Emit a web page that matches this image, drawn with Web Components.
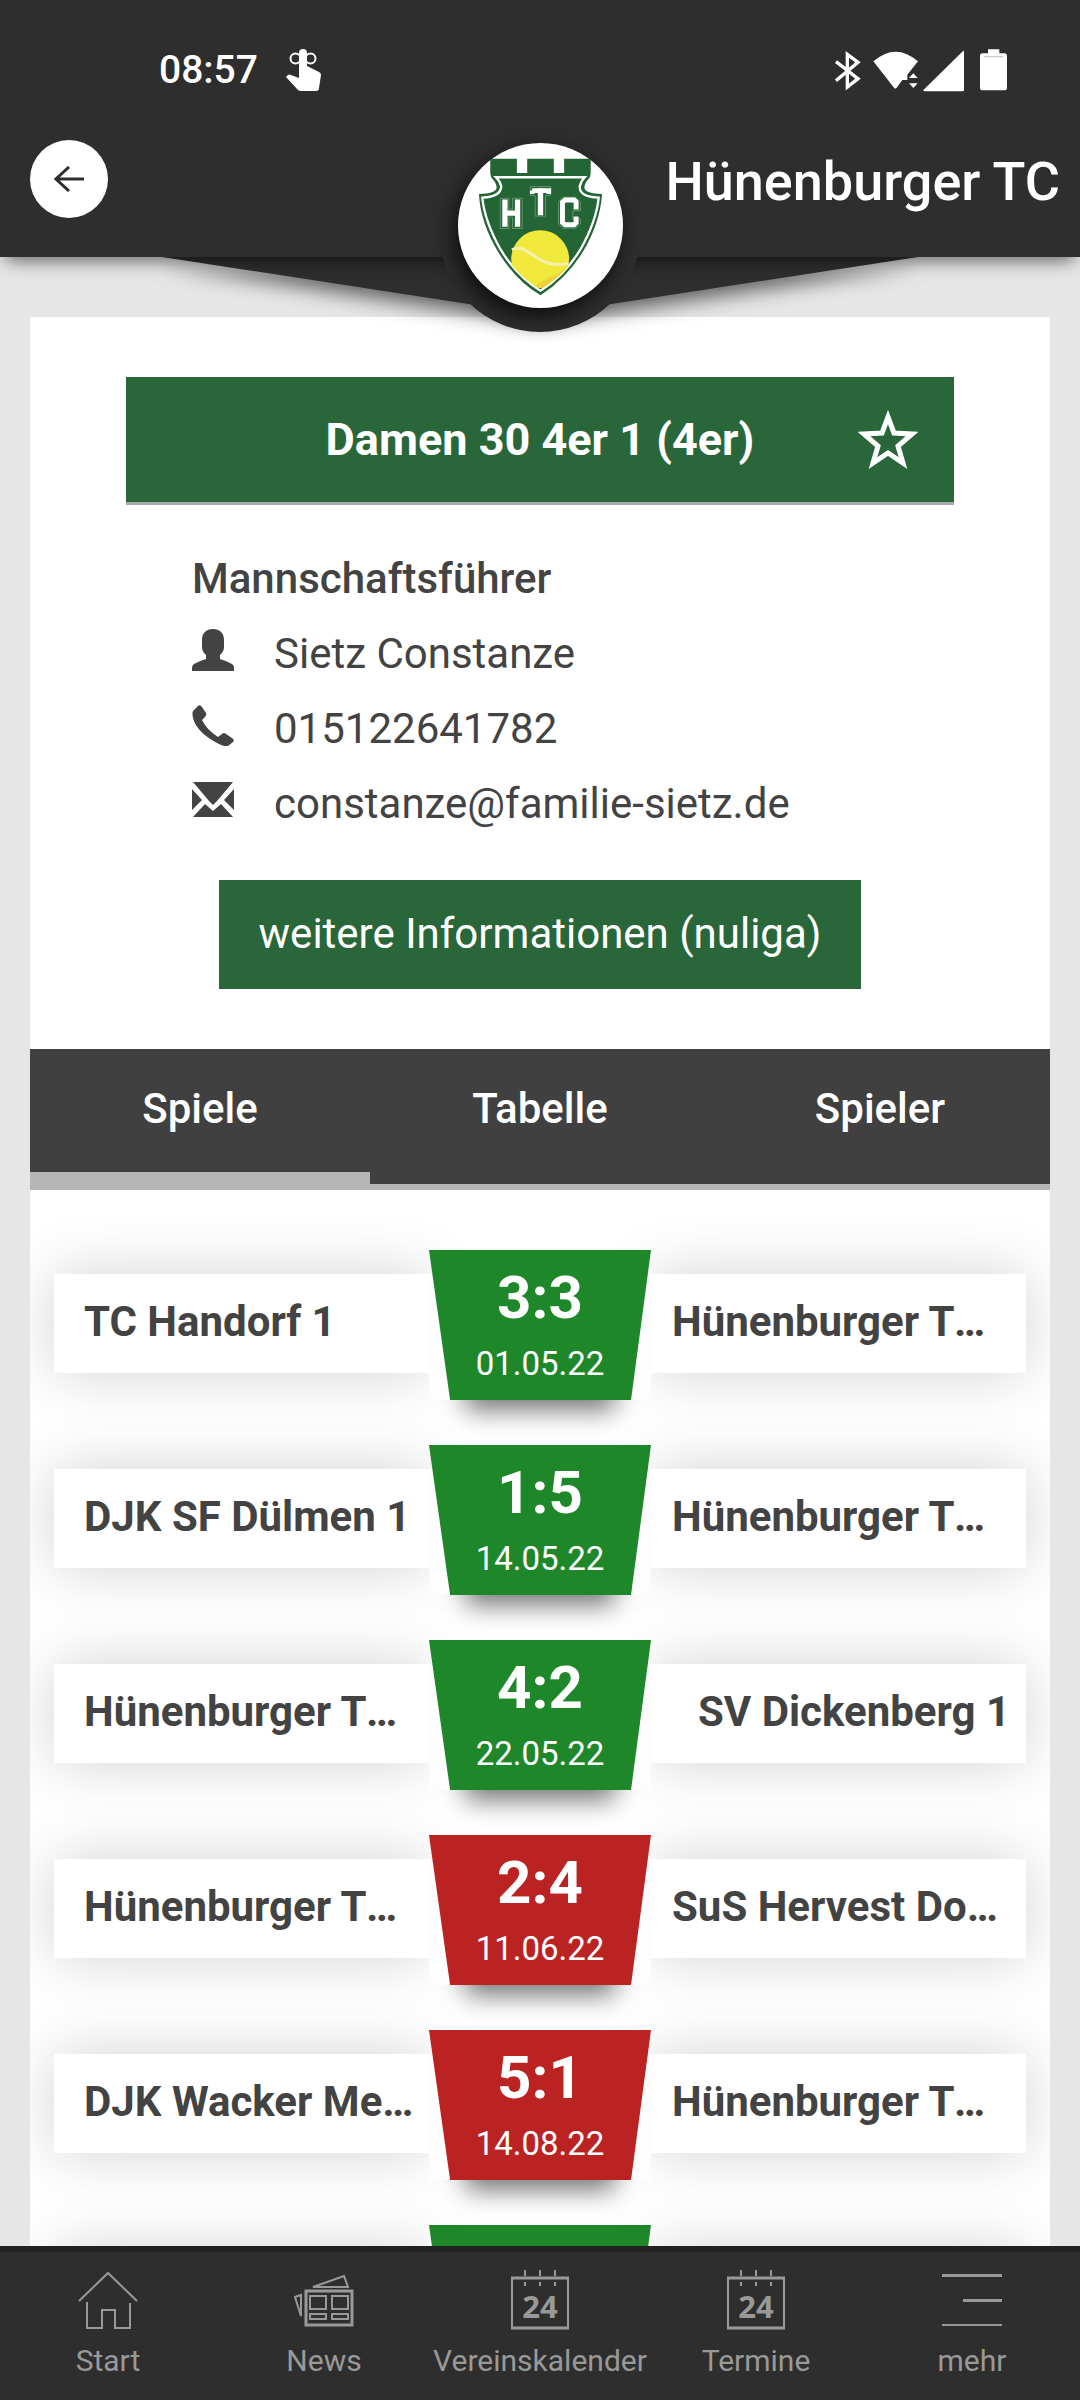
<!DOCTYPE html>
<html lang="de">
<head>
<meta charset="utf-8">
<meta name="viewport" content="width=device-width, initial-scale=1">
<title>Hünenburger TC</title>
<style>
  html, body { margin: 0; height: 100%; }
  body {
    --bar: #2e2e2e;
    --club: #296639;
    --ink: #434343;
    --rule: #b6b6b6;
    font-family: Roboto, "Liberation Sans", sans-serif;
    font-size: 42px;
    line-height: 49px;
    color: var(--ink);
    background: #e6e6e6;
  }
</style>
</head>
<body>
<club-app>
  <app-header slot="header">
    <status-bar slot="status">08:57</status-bar>
    Hünenburger TC
  </app-header>

  <team-panel>
    <span slot="name">Damen 30 4er 1 (4er)</span>
    <span slot="role">Mannschaftsführer</span>
    <contact-line icon="person">Sietz Constanze</contact-line>
    <contact-line icon="phone" href="tel:015122641782">015122641782</contact-line>
    <contact-line icon="mail" href="mailto:constanze@familie-sietz.de">constanze@familie-sietz.de</contact-line>
    <span slot="more">weitere Informationen (nuliga)</span>
  </team-panel>

  <tab-bar>
    <tab-item selected>Spiele</tab-item>
    <tab-item>Tabelle</tab-item>
    <tab-item>Spieler</tab-item>
  </tab-bar>

  <match-list>
    <match-row result="won"><span slot="home">TC Handorf 1</span><span slot="score">3:3</span><span slot="date">01.05.22</span><span slot="away">Hünenburger TC 1</span></match-row>
    <match-row result="won"><span slot="home">DJK SF Dülmen 1</span><span slot="score">1:5</span><span slot="date">14.05.22</span><span slot="away">Hünenburger TC 1</span></match-row>
    <match-row result="won"><span slot="home">Hünenburger TC 1</span><span slot="score">4:2</span><span slot="date">22.05.22</span><span slot="away">SV Dickenberg 1</span></match-row>
    <match-row result="lost"><span slot="home">Hünenburger TC 1</span><span slot="score">2:4</span><span slot="date">11.06.22</span><span slot="away">SuS Hervest Dorsten</span></match-row>
    <match-row result="lost"><span slot="home">DJK Wacker Meckl.</span><span slot="score">5:1</span><span slot="date">14.08.22</span><span slot="away">Hünenburger TC 1</span></match-row>
    <match-row result="won"></match-row>
  </match-list>

  <bottom-nav slot="nav">
    <nav-item icon="home">Start</nav-item>
    <nav-item icon="news">News</nav-item>
    <nav-item icon="calendar">Vereinskalender</nav-item>
    <nav-item icon="calendar">Termine</nav-item>
    <nav-item icon="more">mehr</nav-item>
  </bottom-nav>
</club-app>

<script>
const define = (name, template) => customElements.define(name, class extends HTMLElement {
  constructor() {
    super();
    this.attachShadow({ mode: "open" });
  }
  connectedCallback() {
    this.shadowRoot.innerHTML = typeof template === "function" ? template(this) : template;
  }
});

/* Page frame: header and navigation stay, the middle scrolls. */
define("club-app", `
  <style>
    :host { display: flex; flex-direction: column; height: 100vh; }
    main { flex: 1; min-height: 0; overflow-y: auto; scrollbar-width: none; padding: 60px 30px 0; }
    main::-webkit-scrollbar { display: none; }
    .sheet { background: #fff; overflow: hidden; }
  </style>
  <slot name="header"></slot>
  <main><div class="sheet"><slot></slot></div></main>
  <slot name="nav"></slot>`);

define("status-bar", `
  <style>
    :host { display: flex; align-items: center; gap: 28px; height: 140px; padding: 0 72px 0 159px;
      font-size: 39px; font-weight: 500; color: #fff; }
    .system { margin-left: auto; }
    svg { display: block; flex: none; fill: #fff; }
  </style>
  <span><slot></slot></span>
  <svg width="36" height="42" viewBox="0 0 36 42" aria-hidden="true">
    <g fill="none" stroke="#fff" stroke-width="2"><circle cx="9.500" cy="9.500" r="5"/><circle cx="24.500" cy="9.500" r="5"/></g>
    <path d="M13 4a4 4 0 0 1 8 0v13l12 6q2 1 2 3l-2 13q0 3-3 3H15q-2 0-3-1L0 28l2-2q1-1 3 0l8 3z"/>
  </svg>
  <svg class="system" width="173" height="44" viewBox="45 50 519 132" aria-hidden="true">
    <path d="M48 91l66 51-32 25V69l32 24-66 55" fill="none" stroke="#fff" stroke-width="10"/>
    <path d="M160 90q67-58 134 0l-32 40v16h-15l-17 23q-4 5-8 0z"/>
    <path d="M267 140l13-14 13 14zM267 156h26l-13 14z"/>
    <path d="M430 58q2 0 2 3v115q0 4-4 4H313q-5-1-2-5z"/>
    <path d="M504 54h34v12h15q8 0 8 8v95q0 8-8 8h-65q-8 0-8-8V74q0-8 8-8h16z"/>
    <path d="M492 76h58" stroke="#ccc" stroke-width="4"/>
  </svg>`);

define("app-header", `
  <style>
    :host { display: block; position: relative; z-index: 2; flex: none; }
    .bar { position: relative; padding-bottom: 39px; background: var(--bar); color: #fff;
      box-shadow: 0 10px 16px -6px rgba(0,0,0,.55); }
    .row { display: flex; justify-content: space-between; height: 78px; padding: 0 20px 0 30px; }
    h1 { margin: 0; font-size: 54px; line-height: 84px; font-weight: 500; white-space: nowrap; }
    button { width: 78px; height: 78px; padding: 0; border: 0; border-radius: 50%; background: #fff;
      display: grid; place-items: center; }
    .wedge { position: absolute; left: 15%; right: 15%; top: 100%; height: 58px;
      filter: drop-shadow(0 8px 10px rgba(0,0,0,.6)); }
    .wedge::before { content: ""; display: block; height: 100%; background: var(--bar);
      clip-path: polygon(0 0, 100% 0, 50% 100%); }
    .crest { position: absolute; left: 50%; bottom: -75px; width: 202px; height: 202px; margin-left: -101px;
      border-radius: 50%; background: var(--bar); display: grid; place-items: center; }
    .crest div { width: 165px; height: 165px; margin-bottom: 12px; border-radius: 50%; background: #fff;
      overflow: hidden; box-shadow: -4px 8px 22px rgba(0,0,0,.75); }
    svg { display: block; }
  </style>
  <div class="wedge"></div>
  <header class="bar">
    <slot name="status"></slot>
    <div class="row">
      <button type="button" aria-label="Zurück">
        <svg width="30" height="26" viewBox="0 0 30 26" fill="none" stroke="#2e2e2e" stroke-width="3"><path d="M30 13H3M15 1L2 13l13 12"/></svg>
      </button>
      <h1><slot></slot></h1>
    </div>
  </header>
  <div class="crest"><div>
    <svg width="165" height="165" viewBox="84 68 496 496" aria-hidden="true">
      <path fill="#236534" d="M181 115h80v43h31v-43h80v43h31v-43h80v44q0 12-9 20-10 10-10 24 3 17 53 18-5 85-58 175-50 80-127 130-75-45-127-130-54-90-58-175 50-1 53-18 0-14-10-24-9-8-9-20z"/>
      <path fill="none" stroke="#fff" stroke-width="7" d="M198 171h267q-12 12-15 28-2 31 57 33-7 71-55 156-47 78-120 124-73-46-120-124-48-85-55-156 55-2 57-33-3-16-16-28z"/>
      <clipPath id="shield"><path d="M212 250v0l-42 50 42 88q47 78 120 120 73-42 120-120l42-88-42-50z"/></clipPath>
      <g clip-path="url(#shield)">
        <circle cx="331" cy="417" r="87" fill="#f0e83a"/>
        <path fill="#ecd23b" d="M418 417c-6 50-70 50-106 85h70z"/>
        <path fill="none" stroke="#f7efb0" stroke-width="9" d="M246 389q22-12 48 6l40 26q34 18 82 9"/>
      </g>
      <g fill="none" stroke="#7fa98a" stroke-width="2">
        <path d="M211 234h26v33h11v-33h29v91h-29v-34h-11v34h-26z"/>
        <path d="M302 199h60v27h-15v62h-31v-62h-14z"/>
        <path d="M399 231h39l14 14v27h-23v24h23v16l-14 12h-39l-13-12v-67z"/>
      </g>
      <g fill="none" stroke="#fff">
        <path stroke-width="16" d="M225 238v82M263 238v82M225 279h38M332 204v81"/>
        <path stroke-width="14" d="M307 211h50v10M307 211v10"/>
        <path stroke-width="15" d="M439 268v-23l-6-6h-27l-8 7v61l8 7h27l6-6v-19"/>
      </g>
    </svg>
  </div></div>`);

define("team-panel", `
  <style>
    :host { display: block; padding: 60px 96px; }
    .title { display: flex; align-items: center; padding: 0 36px; height: 125px; background: var(--club);
      border-bottom: 3px solid #a0aca4; color: #fff; }
    h2 { flex: 1; margin: 0 0 0 60px; font-size: 45px; font-weight: 700; text-align: center; }
    .title button { flex: none; padding: 0; border: 0; background: none; width: 60px; height: 60px; }
    svg { display: block; }
    .contact { padding: 36px 60px 0 66px; }
    h3 { margin: 0; font-size: 42px; line-height: 75px; font-weight: 500; }
    .more { display: flex; justify-content: center; padding-top: 39px; }
    .more a { padding: 29px 40px 31px; background: var(--club); color: #fff; text-decoration: none; }
  </style>
  <div class="title">
    <h2><slot name="name"></slot></h2>
    <button type="button" aria-label="Favorit">
      <svg width="60" height="60" viewBox="0 0 60 60" fill="none" stroke="#fff" stroke-width="5"><path d="M30 7l6 16 18 1-14 12 5 17-15-10-15 10 5-17L6 24l18-1z"/></svg>
    </button>
  </div>
  <div class="contact">
    <h3><slot name="role"></slot></h3>
    <slot></slot>
  </div>
  <div class="more"><a href="#nuliga"><slot name="more"></slot></a></div>`);

const contactIcons = {
  person: '<path d="M21 0c7 0 11 4 11 11v7c0 4-2 6-4 8v4q7 2 12 5 2 1 2 4v3H0v-3q0-3 2-4 5-3 12-5v-4c-2-2-4-4-4-8v-7C10 4 14 0 21 0z"/>',
  phone: '<path d="M1 7l5-5q2-2 4 1l4 6q1 2-1 4l-3 3q4 9 16 17l4-3q2-2 4 0l6 4q3 2 1 4l-5 4q-3 1-9-2Q5 29 1 14 0 9 1 7z"/>',
  mail: '<path d="M1 3h40L25 22l-4 4-4-4zM0 10l10 11L0 31zM42 10L32 21l10 10zM13 25l8 7 8-7 12 13H1z"/>'
};
define("contact-line", el => `
  <style>
    :host { display: flex; align-items: center; gap: 40px; height: 75px; }
    svg { display: block; flex: none; width: 42px; height: 42px; margin-bottom: 8px; fill: var(--ink); }
    a { color: inherit; text-decoration: none; }
  </style>
  <svg viewBox="0 0 42 42" aria-hidden="true">${contactIcons[el.getAttribute("icon")]}</svg>
  ${el.hasAttribute("href") ? `<a href="${el.getAttribute("href")}"><slot></slot></a>` : "<span><slot></slot></span>"}`);

define("tab-bar", `
  <style>
    :host { display: flex; background: #404040; border-bottom: 6px solid var(--rule); }
  </style>
  <slot></slot>`);

define("tab-item", `
  <style>
    :host { flex: 1; display: flex; }
    button { flex: 1; padding: 35px 0 39px; border: 0; border-bottom: 12px solid transparent; background: none;
      font: inherit; font-weight: 500; color: #fff; }
    :host([selected]) button { border-color: var(--rule); }
  </style>
  <button type="button"><slot></slot></button>`);

define("match-list", `
  <style>
    :host { display: flex; flex-direction: column; gap: 45px; padding: 60px 24px; }
  </style>
  <slot></slot>`);

define("match-row", `
  <style>
    :host { display: flex; align-items: flex-start; --tone: #1e872a; }
    :host([result="lost"]) { --tone: #bb2323; }
    .team { flex: 1; min-width: 0; box-sizing: border-box; height: 99px; margin-top: 24px; background: #fff;
      font-weight: 700; box-shadow: 0 0 60px rgba(0,0,0,.18); }
    .home { padding: 23px 7px 27px 30px; }
    .away { padding: 23px 16px 27px 21px; text-align: right; }
    .team div { overflow: hidden; text-overflow: ellipsis; white-space: nowrap; }
    .badge { flex: none; position: relative; z-index: 1; width: 222px; height: 150px;
      background: linear-gradient(transparent 24px, #fdfdfd 24px); }
    .badge::before { content: ""; position: absolute; inset: 100px 36px 0; box-shadow: 0 10px 26px rgba(0,0,0,.55);
      clip-path: inset(50px -40px -60px); }
    .face { position: relative; box-sizing: border-box; height: 150px; padding-top: 12px; background: var(--tone); color: #fff;
      text-align: center; clip-path: polygon(0 0, 100% 0, 91% 100%, 9.500% 100%); }
    .score { height: 72px; font-size: 60px; line-height: 72px; font-weight: 700; }
    .date { margin-top: 10px; font-size: 33px; line-height: 40px; }
  </style>
  <div class="team home"><div><slot name="home"></slot></div></div>
  <div class="badge"><div class="face">
    <div class="score"><slot name="score"></slot></div>
    <div class="date"><slot name="date"></slot></div>
  </div></div>
  <div class="team away"><div><slot name="away"></slot></div></div>`);

define("bottom-nav", `
  <style>
    :host { display: flex; flex: none; position: relative; z-index: 2; background: var(--bar); border-top: 6px solid #222; }
    nav { flex: 1; display: flex; }
  </style>
  <nav><slot></slot></nav>`);

const navIcons = {
  home: '<path stroke-width="2" d="M1 31L30 3l29 28M9 32v26h15V40h13v18h15V33"/>',
  news: '<path stroke-width="3" d="M12 21h46v34H12z"/><path stroke-width="2" d="M16 26h16v13H16zM38 26h16v13H38zM16 44h16v5H16zM38 44h16v5H38zM19 17l31-11 4 11zM1 27l6-2v21z"/>',
  calendar: '<path stroke-width="2" d="M2 8v51M58 8v51M15 0v6M30 0v6M45 0v6M15 12v4M30 12v4M45 12v4"/><path stroke-width="3" d="M1 8h58M1 58h58"/><text x="30" y="48" text-anchor="middle" font-family="Open Sans, sans-serif" font-weight="700" font-size="31" fill="#999" stroke="none">24</text>',
  more: '<path stroke-width="3" d="M0 5.500h60M21 30.500h39"/><path stroke-width="2" d="M0 55h60"/>'
};
define("nav-item", el => `
  <style>
    :host { flex: 1 1 0; min-width: 0; }
    a { display: flex; flex-direction: column; align-items: center; gap: 14px; padding: 18px 0 22px;
      font-size: 30px; line-height: 34px; color: #999; text-decoration: none; white-space: nowrap; }
    svg { display: block; width: 60px; height: 60px; fill: none; stroke: #999; }
  </style>
  <a href="#${el.getAttribute("icon")}"><svg viewBox="0 0 60 60" aria-hidden="true">${navIcons[el.getAttribute("icon")]}</svg><span><slot></slot></span></a>`);
</script>
</body>
</html>
